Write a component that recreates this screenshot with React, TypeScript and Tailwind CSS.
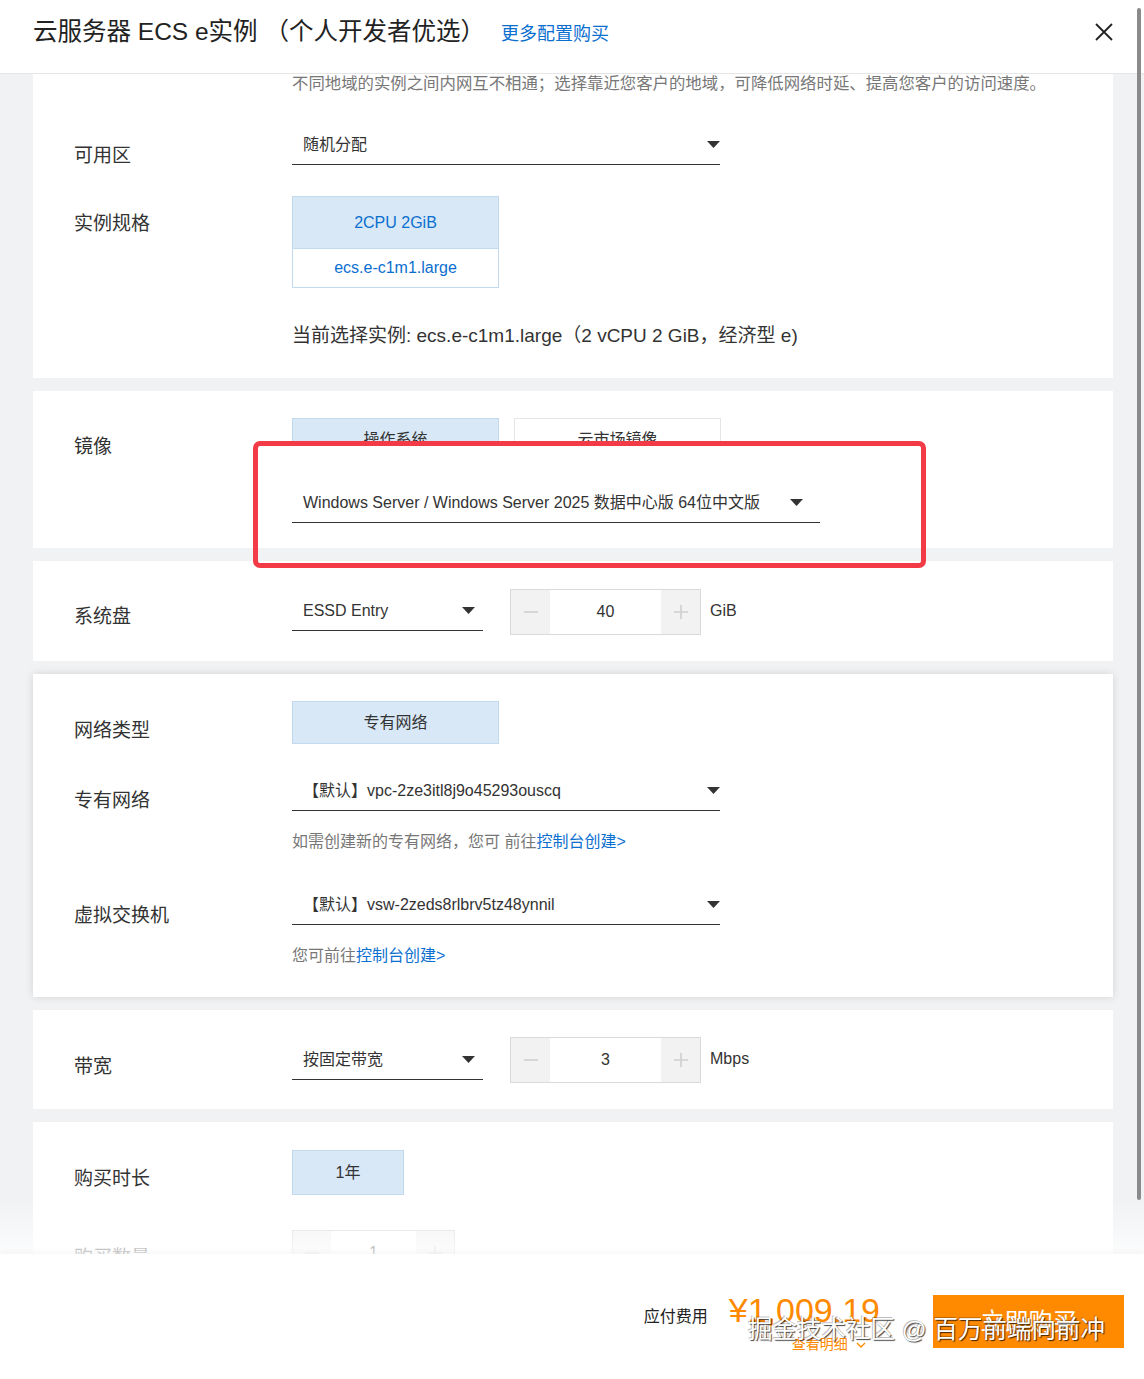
import React from 'react';

const Caret = () => (
    <svg width="13" height="7" viewBox="0 0 13 7" className="shrink-0">
        <path d="M0 0h13L6.5 7z" fill="#333" />
    </svg>
);

const Minus = () => (
    <svg width="16" height="16" viewBox="0 0 16 16">
        <path d="M1 8h14" stroke="#cfcfcf" strokeWidth="1.6" />
    </svg>
);

const Plus = () => (
    <svg width="16" height="16" viewBox="0 0 16 16">
        <path d="M1 8h14M8 1v14" stroke="#cfcfcf" strokeWidth="1.6" />
    </svg>
);

const Label = ({ text, pad = 'pt-[17px]' }: { text: string; pad?: string }) => (
    <div className={`w-[218px] shrink-0 text-[19px] leading-[24px] text-[#333] ${pad}`}>{text}</div>
);

const Dropdown = ({ text, className }: { text: string; className: string }) => (
    <div className={`flex h-[40px] items-center justify-between border-b border-[#333] pl-[11px] text-[16px] text-[#333] ${className}`}>
        <span className="whitespace-nowrap">{text}</span>
        <Caret />
    </div>
);

const Stepper = ({ value, className = 'h-[46px] w-[191px]', side = 'w-[39px]' }: { value: string; className?: string; side?: string }) => (
    <div className={`flex border border-[#d9d9d9] ${className}`}>
        <div className={`flex items-center justify-center bg-[#f2f2f2] ${side}`}><Minus /></div>
        <div className="flex flex-1 items-center justify-center bg-white text-[16px] text-[#333]">{value}</div>
        <div className={`flex items-center justify-center bg-[#f2f2f2] ${side}`}><Plus /></div>
    </div>
);

const Card = ({ children, className }: { children: React.ReactNode; className: string }) => (
    <div className={`w-[1080px] shrink-0 bg-white pl-[41px] ${className}`}>{children}</div>
);

const App: React.FC = () => {
    return (
        <div className="relative flex h-[1379px] w-[1144px] flex-col overflow-hidden bg-[#f0f2f4] font-['Liberation_Sans','Noto_Sans_CJK_SC',sans-serif]">
            {/* header */}
            <div className="flex h-[74px] shrink-0 items-start justify-between border-b border-[#e6e6e6] bg-white pl-[33px] pr-[31px] pt-[14px]">
                <div className="flex items-baseline">
                    <span className="text-[24.5px] leading-[36px] text-[#222]">云服务器 ECS e实例 （个人开发者优选）</span>
                    <span className="ml-[16px] text-[18px] text-[#0b6fcf]">更多配置购买</span>
                </div>
                <svg width="18" height="18" viewBox="0 0 18 18" className="mt-[9px]">
                    <path d="M1 1l16 16M17 1L1 17" stroke="#222" strokeWidth="1.8" />
                </svg>
            </div>

            {/* scrolling form */}
            <div className="relative h-[1180px] shrink-0 overflow-hidden">
                <div className="flex flex-col gap-[13px] pl-[33px]">
                    <Card className="h-[304px]">
                        <div className="pl-[218px] text-[16.4px] leading-[18px] text-[#777]">
                            不同地域的实例之间内网互不相通；选择靠近您客户的地域，可降低网络时延、提高您客户的访问速度。
                        </div>
                        <div className="mt-[33px] flex h-[41px]">
                            <Label text="可用区" pad="pt-[19px]" />
                            <Dropdown text="随机分配" className="w-[428px]" />
                        </div>
                        <div className="mt-[30px] flex">
                            <Label text="实例规格" pad="pt-[16px]" />
                            <div className="w-[207px] border border-[#c3daee]">
                                <div className="flex h-[51px] items-center justify-center bg-[#d8e8f6] text-[16px] text-[#0b6fcf]">2CPU 2GiB</div>
                                <div className="flex h-[39px] items-center justify-center border-t border-[#c3daee] bg-white text-[16px] text-[#0b6fcf]">ecs.e-c1m1.large</div>
                            </div>
                        </div>
                        <div className="mt-[36px] pl-[218px] text-[19px] leading-[24px] text-[#333]">
                            当前选择实例: ecs.e-c1m1.large（2 vCPU 2 GiB，经济型 e)
                        </div>
                    </Card>

                    <Card className="h-[157px] pt-[27px]">
                        <div className="flex">
                            <Label text="镜像" />
                            <div>
                                <div className="flex gap-[15px]">
                                    <div className="flex h-[43px] w-[207px] items-center justify-center border border-[#c3daee] bg-[#d8e8f6] text-[16px] text-[#333]">操作系统</div>
                                    <div className="flex h-[43px] w-[207px] items-center justify-center border border-[#e6e6e6] bg-white text-[16px] text-[#333]">云市场镜像</div>
                                </div>
                                <Dropdown text="Windows Server / Windows Server 2025 数据中心版 64位中文版" className="mt-[22px] w-[528px] pr-[17px] text-[16.3px]" />
                            </div>
                        </div>
                    </Card>

                    <Card className="h-[100px] pt-[28px]">
                        <div className="flex items-start">
                            <Label text="系统盘" pad="pt-[16px]" />
                            <Dropdown text="ESSD Entry" className="mt-[2px] w-[191px] pr-[8px]" />
                            <Stepper value="40" className="ml-[27px] h-[46px] w-[191px]" />
                            <span className="ml-[9px] pt-[10px] text-[16px] text-[#333]">GiB</span>
                        </div>
                    </Card>

                    <Card className="h-[323px] pt-[27px] shadow-[0_0_8px_rgba(0,0,0,0.13)]">
                        <div className="flex">
                            <Label text="网络类型" pad="pt-[18px]" />
                            <div className="flex h-[43px] w-[207px] items-center justify-center border border-[#c3daee] bg-[#d8e8f6] text-[16px] text-[#333]">专有网络</div>
                        </div>
                        <div className="mt-[27px] flex">
                            <Label text="专有网络" pad="pt-[18px]" />
                            <div>
                                <Dropdown text="【默认】vpc-2ze3itl8j9o45293ouscq" className="w-[428px] pl-[5px]" />
                                <div className="mt-[19px] text-[16px] leading-[24px] text-[#777]">
                                    如需创建新的专有网络，您可 前往<span className="text-[#0b6fcf]">控制台创建&gt;</span>
                                </div>
                            </div>
                        </div>
                        <div className="mt-[31px] flex">
                            <Label text="虚拟交换机" pad="pt-[19px]" />
                            <div>
                                <Dropdown text="【默认】vsw-2zeds8rlbrv5tz48ynnil" className="w-[428px] pl-[5px]" />
                                <div className="mt-[19px] text-[16px] leading-[24px] text-[#777]">
                                    您可前往<span className="text-[#0b6fcf]">控制台创建&gt;</span>
                                </div>
                            </div>
                        </div>
                    </Card>

                    <Card className="h-[99px] pt-[27px]">
                        <div className="flex items-start">
                            <Label text="带宽" pad="pt-[18px]" />
                            <Dropdown text="按固定带宽" className="mt-[3px] w-[191px] pr-[8px]" />
                            <Stepper value="3" className="ml-[27px] h-[46px] w-[191px]" />
                            <span className="ml-[9px] pt-[10px] text-[16px] text-[#333]">Mbps</span>
                        </div>
                    </Card>

                    <Card className="h-[200px] pt-[28px]">
                        <div className="flex">
                            <Label text="购买时长" pad="pt-[17px]" />
                            <div className="flex h-[45px] w-[112px] items-center justify-center border border-[#c3daee] bg-[#d8e8f6] text-[16px] text-[#333]">1年</div>
                        </div>
                        <div className="mt-[35px] flex">
                            <Label text="购买数量" pad="pt-[16px]" />
                            <Stepper value="1" className="h-[46px] w-[163px]" side="w-[38px]" />
                        </div>
                    </Card>
                </div>
                {/* fade above footer */}
                <div className="pointer-events-none absolute bottom-0 left-0 h-[52px] w-full bg-gradient-to-b from-transparent to-white/80" />
            </div>

            {/* footer */}
            <div className="relative z-10 flex h-[125px] shrink-0 items-start justify-end bg-white pr-[20px] pt-[36px] shadow-[0_-2px_6px_rgba(0,0,0,0.04)]">
                <div className="mt-[15px] text-[16px] text-[#222]">应付费用</div>
                <div className="ml-[21px] flex flex-col items-start">
                    <div className="text-[34px] leading-[40px] text-[#ff8a00]">¥1,009.19</div>
                    <div className="ml-[63px] mt-[4px] flex items-center gap-[8px] text-[14px] text-[#ff8a00]">
                        查看明细
                        <svg width="10" height="6" viewBox="0 0 10 6"><path d="M1 1l4 4 4-4" stroke="#ff8a00" strokeWidth="1.3" fill="none" /></svg>
                    </div>
                </div>
                <div className="ml-[53px] mt-[5px] flex h-[53px] w-[191px] items-center justify-center bg-[#ff8a00] text-[24px] text-white">立即购买</div>
                {/* watermark */}
                <div className="pointer-events-none absolute left-[748px] top-[60px] text-[24.5px] leading-[32px] text-white [text-shadow:1px_1px_1px_rgba(0,0,0,0.75),-1px_-1px_0_rgba(0,0,0,0.25)]">
                    掘金技术社区 @ 百万前端向前冲
                </div>
            </div>

            {/* annotation box */}
            <div className="pointer-events-none absolute left-[253px] top-[441px] h-[127px] w-[673px] rounded-[7px] border-[5px] border-[#f23b46]">
                <div className="mx-[33px] h-[15px] bg-white" />
            </div>

            {/* scrollbar */}
            <div className="absolute left-[1137px] top-[8px] h-[1192px] w-[4px] rounded-full bg-[#8a8a8a]" />
        </div>
    );
};

export default App;
